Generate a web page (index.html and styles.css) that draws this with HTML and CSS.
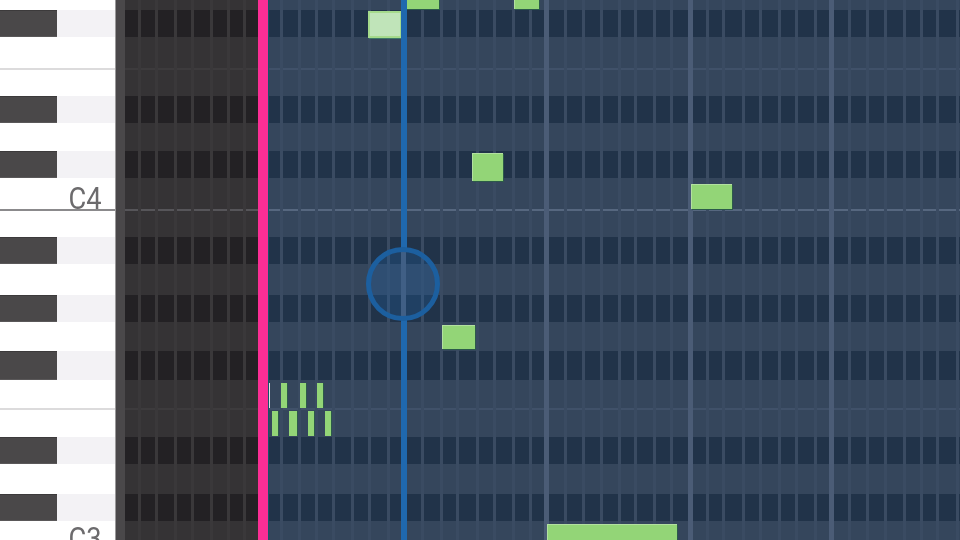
FILE: index.html
```html
<!DOCTYPE html>
<html lang="en">
<head>
<meta charset="utf-8">
<title>Piano roll</title>
<link rel="stylesheet" href="styles.css">
</head>
<body>
<main class="roll">
  <div class="rows">
    <div class="row"><div class="key"></div><div class="dark"></div><div class="blue"></div></div>
    <div class="row k"><div class="key"></div><div class="dark"></div><div class="blue"></div></div>
    <div class="row sep"><div class="key"></div><div class="dark"></div><div class="blue"></div></div>
    <div class="row"><div class="key"></div><div class="dark"></div><div class="blue"></div></div>
    <div class="row k"><div class="key"></div><div class="dark"></div><div class="blue"></div></div>
    <div class="row"><div class="key"></div><div class="dark"></div><div class="blue"></div></div>
    <div class="row k"><div class="key"></div><div class="dark"></div><div class="blue"></div></div>
    <div class="row sep octave"><div class="key"><span class="label">C4</span></div><div class="dark"></div><div class="blue"></div></div>
    <div class="row"><div class="key"></div><div class="dark"></div><div class="blue"></div></div>
    <div class="row k"><div class="key"></div><div class="dark"></div><div class="blue"></div></div>
    <div class="row"><div class="key"></div><div class="dark"></div><div class="blue"></div></div>
    <div class="row k"><div class="key"></div><div class="dark"></div><div class="blue"></div></div>
    <div class="row"><div class="key"></div><div class="dark"></div><div class="blue"></div></div>
    <div class="row k"><div class="key"></div><div class="dark"></div><div class="blue"></div></div>
    <div class="row sep"><div class="key"></div><div class="dark"></div><div class="blue"></div></div>
    <div class="row"><div class="key"></div><div class="dark"></div><div class="blue"></div></div>
    <div class="row k"><div class="key"></div><div class="dark"></div><div class="blue"></div></div>
    <div class="row"><div class="key"></div><div class="dark"></div><div class="blue"></div></div>
    <div class="row k"><div class="key"></div><div class="dark"></div><div class="blue"></div></div>
    <div class="row last"><div class="key"><span class="label">C3</span></div><div class="dark"></div><div class="blue"></div></div>
  </div>

  <div class="gutter"></div>

  <div class="lines">
    <i></i><i class="d"></i><i class="d"></i><i class="d"></i><i class="d"></i><i class="d"></i><i class="d"></i><i class="d"></i>
    <i></i><i></i><i></i><i></i><i></i><i></i><i></i><i></i>
    <i class="b"></i><i></i><i></i><i></i><i></i><i></i><i></i><i></i>
    <i class="b"></i><i></i><i></i><i></i><i></i><i></i><i></i><i></i>
    <i class="b"></i><i></i><i></i><i></i><i></i><i></i><i></i><i></i>
    <i class="b"></i><i></i><i></i><i></i><i></i><i></i><i></i><i></i>
  </div>

  <div class="note n1 selected"></div>
  <div class="note n2"></div>
  <div class="note n3"></div>
  <div class="note n4"></div>
  <div class="note n5"></div>
  <div class="note n6"></div>
  <div class="note n7"></div>
  <div class="note tick ta1 pale"></div>
  <div class="note tick ta2"></div>
  <div class="note tick ta3"></div>
  <div class="note tick ta4"></div>
  <div class="note tick tb1"></div>
  <div class="note tick tb2"></div>
  <div class="note tick tb3"></div>
  <div class="note tick tb4"></div>

  <div class="start-marker"></div>
  <div class="playhead upper"></div>
  <div class="playhead lower"></div>
  <div class="touch"></div>
</main>
</body>
</html>
```
FILE: styles.css
```css
* { box-sizing: border-box; }
html, body { margin: 0; padding: 0; background: #35465c; }
body { width: 960px; height: 540px; overflow: hidden; }

.roll {
  position: relative;
  width: 960px;
  height: 540px;
  overflow: hidden;
  filter: blur(0.7px);
}

/* rows */
.rows {
  display: grid;
  height: 540px;
  grid-template-rows: 10px 27px 33px 26px 27px 28px 27px 33px 26px 27px 31px 27px 29px 29px 30px 27px 27px 30px 27px 19px;
}
.row { display: grid; grid-template-columns: 116px 146px 1fr; min-height: 0; }
.key {
  background: #fff;
  display: flex;
  justify-content: flex-end;
  align-items: flex-end;
  padding-right: 14px;
}
.dark { background: #353335; }
.blue { background: #35465c; }

.row.k .key { background: #f3f2f5; justify-content: flex-start; align-items: stretch; padding-right: 0; }
.row.k .key::before {
  content: "";
  width: 57px;
  background: #4a4849;
  border-top: 1px solid #3c3a3b;
  border-bottom: 1px solid #5a5859;
}
.row.k .dark { background: #232124; }
.row.k .blue { background: #213349; }

.row.sep .key { border-bottom: 2px solid #dcdbdc; }
.row.sep .dark { border-bottom: 2px solid #3d3b3d; }
.row.sep .blue { border-bottom: 2px solid #405169; }
.row.octave .key { border-bottom-color: #8b8a8c; }
.row.octave .dark { border-bottom-color: #565559; }
.row.octave .blue { border-bottom-color: #56677f; }
.row.last .key { align-items: flex-start; }

.label {
  font-family: "Roboto", "Liberation Sans", sans-serif;
  font-size: 31px;
  line-height: 30px;
  color: #6c6b6d;
  transform: scaleX(0.88);
  transform-origin: right center;
}
.row.octave .label { margin-bottom: -5px; }
.row.last .label { margin-top: 3px; }

/* gutter between keys and grid */
.gutter {
  position: absolute;
  left: 116px;
  top: 0;
  bottom: 0;
  width: 9px;
  background: #4a484a;
  box-shadow: -1px 0 0 #9a999a;
}

/* beat lines */
.lines {
  position: absolute;
  left: 125px;
  top: 0;
  bottom: 0;
  right: 0;
  display: grid;
  grid-template-columns: 13px 16.5px 19px 17.5px 18.5px 17px 16.5px 18px 18.5px 18px 17.5px 17px 19px 17px 18.5px 15px 19px 19px 16.5px 20px 16.5px 19.5px 17px 16px 19px 17.5px 18.5px 17.5px 16px 19.5px 16.5px 19.5px 16.5px 16px 20px 17px 19px 17px 19px 16.5px 17.5px 18px 18px 19px 17px 16px 20px 5px;
}
.lines i { display: block; border-left: 3px solid #3a4b62; }
.lines i:first-child { border-left: 0; }
.lines i.d { border-left-color: #3a383a; }
.lines i.b { border-left: 5px solid #4b5c76; margin-left: -1px; }

/* notes */
.note {
  position: absolute;
  background: #93d577;
  box-shadow: 1px 1px 0 #2c5a4a, inset 1px 1px 0 #b3e0a0;
}
.n1 { left: 368px; top: 11px; width: 34px; height: 27px; }
.n2 { left: 406px; top: -2px; width: 33px; height: 11px; }
.n3 { left: 514px; top: -2px; width: 25px; height: 11px; }
.n4 { left: 472px; top: 153px; width: 31px; height: 28px; }
.n5 { left: 691px; top: 184px; width: 41px; height: 25px; }
.n6 { left: 442px; top: 325px; width: 33px; height: 24px; }
.n7 { left: 547px; top: 524px; width: 130px; height: 20px; }
.selected {
  background: #c0e4b9;
  box-shadow: 1px 1px 0 #3f7a68, inset 0 0 0 2px #a5da8c;
}
.tick { width: 6px; height: 25px; box-shadow: 1px 0 0 #2c5a4a; }
.ta1 { left: 267px; top: 383px; width: 3px; }
.ta2 { left: 281px; top: 383px; }
.ta3 { left: 300px; top: 383px; }
.ta4 { left: 317px; top: 383px; }
.tb1 { left: 272px; top: 411px; }
.tb2 { left: 289px; top: 411px; width: 8px; }
.tb3 { left: 308px; top: 411px; }
.tb4 { left: 325px; top: 411px; }
.pale { background: #e2dfe6; box-shadow: none; }

/* markers */
.start-marker {
  position: absolute;
  left: 258px;
  top: 0;
  bottom: 0;
  width: 10px;
  background: #fb2e95;
  box-shadow: 1px 0 0 #14566a;
}
.playhead {
  position: absolute;
  left: 400.5px;
  width: 6.5px;
  background: #1f68ae;
}
.playhead.upper { top: 0; height: 248px; }
.playhead.lower { top: 320px; bottom: 0; }
.touch {
  position: absolute;
  left: 366px;
  top: 247px;
  width: 74px;
  height: 74px;
  border: 5px solid #1c5f9f;
  border-radius: 50%;
  background: rgba(32, 105, 178, 0.25);
}
```
